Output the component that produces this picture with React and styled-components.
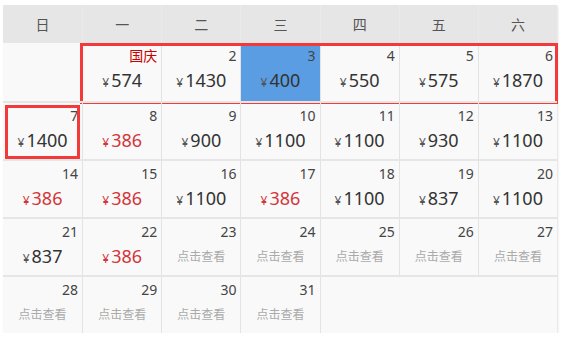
import React from "react";
import styled, { createGlobalStyle } from "styled-components";

const GlobalStyle = createGlobalStyle`
  body {
    margin: 0;
    background: #fff;
    font-family: "Noto Sans", "Noto Sans CJK SC", sans-serif;
  }
`;

const Calendar = styled.div`
  width: 554px;
  margin: 5px 0 0 3px;
  background: #f9f9f9;
  box-shadow: 1px 1px 2px rgba(0, 0, 0, 0.12);
`;

const HeadRow = styled.div`
  display: grid;
  grid-template-columns: repeat(7, 1fr);
  height: 38px;
  background: #e6e6e6;
`;

const HeadCell = styled.div`
  display: flex;
  align-items: center;
  justify-content: center;
  font-size: 14px;
  color: #555;
  border-left: ${(p) => (p.first ? "none" : "1px solid #eaeaea")};
`;

const Row = styled.div`
  position: relative;
  display: grid;
  grid-template-columns: repeat(7, 1fr);
  height: 58px;
  border-top: ${(p) => (p.first ? "none" : "2px solid #e6e6e6")};
  box-sizing: border-box;
`;

const Cell = styled.div`
  display: flex;
  flex-direction: column;
  border-left: ${(p) => (p.noLine ? "none" : "1px solid #e3e3e3")};
  background: ${(p) => (p.selected ? "#5a9de2" : "transparent")};
  min-width: 0;
`;

const DayNum = styled.div`
  text-align: right;
  padding: 5px 4px 0 0;
  font-size: 14px;
  line-height: 16px;
  color: ${(p) => (p.holiday ? "#c80000" : "#444")};
`;

const Price = styled.div`
  margin-top: 5px;
  text-align: center;
  font-size: 18px;
  line-height: 22px;
  color: ${(p) => (p.low ? "#d3363a" : "#333")};
`;

const Yen = styled.span`
  font-size: 12px;
  margin-right: 2px;
  color: ${(p) => (p.low ? "#d3363a" : "#555")};
`;

const Check = styled.div`
  margin-top: 9px;
  text-align: center;
  font-size: 12px;
  line-height: 16px;
  color: #aaa;
`;

const Highlight = styled.div`
  position: absolute;
  pointer-events: none;
  border: 3px solid #f23a3a;
  box-sizing: border-box;
`;

const heads = ["日", "一", "二", "三", "四", "五", "六"];

const rows = [
  [null, { d: "国庆", p: 574, h: true }, { d: 2, p: 1430 }, { d: 3, p: 400, s: true }, { d: 4, p: 550 }, { d: 5, p: 575 }, { d: 6, p: 1870 }],
  [{ d: 7, p: 1400 }, { d: 8, p: 386, r: true }, { d: 9, p: 900 }, { d: 10, p: 1100 }, { d: 11, p: 1100 }, { d: 12, p: 930 }, { d: 13, p: 1100 }],
  [{ d: 14, p: 386, r: true }, { d: 15, p: 386, r: true }, { d: 16, p: 1100 }, { d: 17, p: 386, r: true }, { d: 18, p: 1100 }, { d: 19, p: 837 }, { d: 20, p: 1100 }],
  [{ d: 21, p: 837 }, { d: 22, p: 386, r: true }, { d: 23 }, { d: 24 }, { d: 25 }, { d: 26 }, { d: 27 }],
  [{ d: 28 }, { d: 29 }, { d: 30 }, { d: 31 }, null, null, null],
];

function Day({ day, noLine }) {
  if (!day) return <Cell noLine={noLine} />;
  return (
    <Cell noLine={noLine} selected={day.s}>
      <DayNum holiday={day.h}>{day.d}</DayNum>
      {day.p ? (
        <Price low={day.r}>
          <Yen low={day.r}>¥</Yen>
          {day.p}
        </Price>
      ) : (
        <Check>点击查看</Check>
      )}
    </Cell>
  );
}

export default function App() {
  return (
    <>
      <GlobalStyle />
      <Calendar>
        <HeadRow>
          {heads.map((h, i) => (
            <HeadCell key={h} first={i === 0}>
              {h}
            </HeadCell>
          ))}
        </HeadRow>
        {rows.map((row, ri) => (
          <Row key={ri} first={ri === 0}>
            {row.map((day, ci) => (
              <Day
                key={ci}
                day={day}
                noLine={ci === 0 || (!day && !row[ci - 1])}
              />
            ))}
            {ri === 0 && (
              <Highlight style={{ left: "77px", right: "-1px", top: "0px", bottom: "-3px" }} />
            )}
            {ri === 1 && (
              <Highlight style={{ left: "2px", width: "75px", top: "2px", bottom: "0px" }} />
            )}
          </Row>
        ))}
      </Calendar>
    </>
  );
}
